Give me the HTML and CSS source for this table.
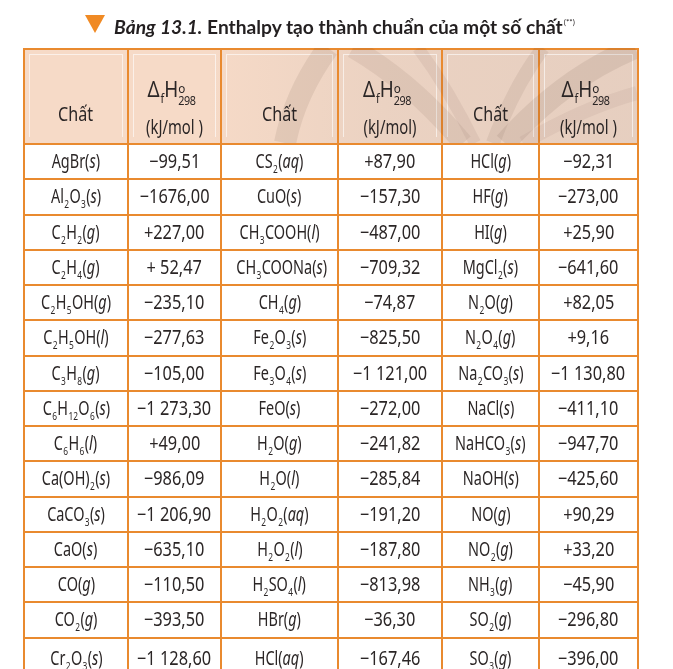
FILE: index.html
```html
<!DOCTYPE html>
<html lang="vi">
<head>
<meta charset="utf-8">
<title>Bảng 13.1</title>
<link rel="stylesheet" href="styles.css">
</head>
<body>
<div class="page">
  <h1 class="title"><span class="tri"></span><span class="ttext"><em>Bảng 13.1.</em> Enthalpy tạo thành chuẩn của một số chất<sup>(**)</sup></span></h1>
  <div class="tblwrap">
  <table class="tbl">
    <colgroup>
      <col class="c1"><col class="c2"><col class="c3"><col class="c4"><col class="c5"><col class="c6">
    </colgroup>
    <thead>
      <tr>
        <th class="hname"><span class="hn">Chất</span></th>
        <th class="hval"><span class="dh">Δ<span class="f">f</span>H<span class="stk"><span class="deg">o</span><span class="t298">298</span></span></span><span class="unit">(kJ/mol )</span></th>
        <th class="hname"><span class="hn">Chất</span></th>
        <th class="hval"><span class="dh">Δ<span class="f">f</span>H<span class="stk"><span class="deg">o</span><span class="t298">298</span></span></span><span class="unit">(kJ/mol)</span></th>
        <th class="hname"><span class="hn">Chất</span></th>
        <th class="hval"><span class="dh">Δ<span class="f">f</span>H<span class="stk"><span class="deg">o</span><span class="t298">298</span></span></span><span class="unit">(kJ/mol )</span></th>
      </tr>
    </thead>
    <tbody>
      <tr><td><span class="n">AgBr(<i>s</i>)</span></td><td><span class="x">−99,51</span></td><td><span class="n">CS<sub>2</sub>(<i>aq</i>)</span></td><td><span class="x">+87,90</span></td><td><span class="n">HCl(<i>g</i>)</span></td><td><span class="x">−92,31</span></td></tr>
      <tr><td><span class="n">Al<sub>2</sub>O<sub>3</sub>(<i>s</i>)</span></td><td><span class="x">−1676,00</span></td><td><span class="n">CuO(<i>s</i>)</span></td><td><span class="x">−157,30</span></td><td><span class="n">HF(<i>g</i>)</span></td><td><span class="x">−273,00</span></td></tr>
      <tr><td><span class="n">C<sub>2</sub>H<sub>2</sub>(<i>g</i>)</span></td><td><span class="x">+227,00</span></td><td><span class="n">CH<sub>3</sub>COOH(<i>l</i>)</span></td><td><span class="x">−487,00</span></td><td><span class="n">HI(<i>g</i>)</span></td><td><span class="x">+25,90</span></td></tr>
      <tr><td><span class="n">C<sub>2</sub>H<sub>4</sub>(<i>g</i>)</span></td><td><span class="x">+ 52,47</span></td><td><span class="n">CH<sub>3</sub>COONa(<i>s</i>)</span></td><td><span class="x">−709,32</span></td><td><span class="n">MgCl<sub>2</sub>(<i>s</i>)</span></td><td><span class="x">−641,60</span></td></tr>
      <tr><td><span class="n">C<sub>2</sub>H<sub>5</sub>OH(<i>g</i>)</span></td><td><span class="x">−235,10</span></td><td><span class="n">CH<sub>4</sub>(<i>g</i>)</span></td><td><span class="x">−74,87</span></td><td><span class="n">N<sub>2</sub>O(<i>g</i>)</span></td><td><span class="x">+82,05</span></td></tr>
      <tr><td><span class="n">C<sub>2</sub>H<sub>5</sub>OH(<i>l</i>)</span></td><td><span class="x">−277,63</span></td><td><span class="n">Fe<sub>2</sub>O<sub>3</sub>(<i>s</i>)</span></td><td><span class="x">−825,50</span></td><td><span class="n">N<sub>2</sub>O<sub>4</sub>(<i>g</i>)</span></td><td><span class="x">+9,16</span></td></tr>
      <tr><td><span class="n">C<sub>3</sub>H<sub>8</sub>(<i>g</i>)</span></td><td><span class="x">−105,00</span></td><td><span class="n">Fe<sub>3</sub>O<sub>4</sub>(<i>s</i>)</span></td><td><span class="x">−1 121,00</span></td><td><span class="n">Na<sub>2</sub>CO<sub>3</sub>(<i>s</i>)</span></td><td><span class="x">−1 130,80</span></td></tr>
      <tr><td><span class="n">C<sub>6</sub>H<sub>12</sub>O<sub>6</sub>(<i>s</i>)</span></td><td><span class="x">−1 273,30</span></td><td><span class="n">FeO(<i>s</i>)</span></td><td><span class="x">−272,00</span></td><td><span class="n">NaCl(<i>s</i>)</span></td><td><span class="x">−411,10</span></td></tr>
      <tr><td><span class="n">C<sub>6</sub>H<sub>6</sub>(<i>l</i>)</span></td><td><span class="x">+49,00</span></td><td><span class="n">H<sub>2</sub>O(<i>g</i>)</span></td><td><span class="x">−241,82</span></td><td><span class="n">NaHCO<sub>3</sub>(<i>s</i>)</span></td><td><span class="x">−947,70</span></td></tr>
      <tr><td><span class="n">Ca(OH)<sub>2</sub>(<i>s</i>)</span></td><td><span class="x">−986,09</span></td><td><span class="n">H<sub>2</sub>O(<i>l</i>)</span></td><td><span class="x">−285,84</span></td><td><span class="n">NaOH(<i>s</i>)</span></td><td><span class="x">−425,60</span></td></tr>
      <tr><td><span class="n">CaCO<sub>3</sub>(<i>s</i>)</span></td><td><span class="x">−1 206,90</span></td><td><span class="n">H<sub>2</sub>O<sub>2</sub>(<i>aq</i>)</span></td><td><span class="x">−191,20</span></td><td><span class="n">NO(<i>g</i>)</span></td><td><span class="x">+90,29</span></td></tr>
      <tr><td><span class="n">CaO(<i>s</i>)</span></td><td><span class="x">−635,10</span></td><td><span class="n">H<sub>2</sub>O<sub>2</sub>(<i>l</i>)</span></td><td><span class="x">−187,80</span></td><td><span class="n">NO<sub>2</sub>(<i>g</i>)</span></td><td><span class="x">+33,20</span></td></tr>
      <tr><td><span class="n">CO(<i>g</i>)</span></td><td><span class="x">−110,50</span></td><td><span class="n">H<sub>2</sub>SO<sub>4</sub>(<i>l</i>)</span></td><td><span class="x">−813,98</span></td><td><span class="n">NH<sub>3</sub>(<i>g</i>)</span></td><td><span class="x">−45,90</span></td></tr>
      <tr><td><span class="n">CO<sub>2</sub>(<i>g</i>)</span></td><td><span class="x">−393,50</span></td><td><span class="n">HBr(<i>g</i>)</span></td><td><span class="x">−36,30</span></td><td><span class="n">SO<sub>2</sub>(<i>g</i>)</span></td><td><span class="x">−296,80</span></td></tr>
      <tr class="last"><td><span class="n">Cr<sub>2</sub>O<sub>3</sub>(<i>s</i>)</span></td><td><span class="x">−1 128,60</span></td><td><span class="n">HCl(<i>aq</i>)</span></td><td><span class="x">−167,46</span></td><td><span class="n">SO<sub>3</sub>(<i>g</i>)</span></td><td><span class="x">−396,00</span></td></tr>
    </tbody>
  </table>
  <svg class="wm" viewBox="0 0 614 95" aria-hidden="true">
    <g fill="none" stroke="#9c8e88" stroke-linecap="butt">
      <path d="M262 95 Q272 45 305 0" stroke-width="22" stroke-opacity="0.16"/>
      <path d="M440 95 Q390 35 330 0" stroke-width="20" stroke-opacity="0.14"/>
      <path d="M452 95 Q425 40 395 0" stroke-width="12" stroke-opacity="0.12"/>
      <path d="M470 95 Q490 40 520 0" stroke-width="14" stroke-opacity="0.14"/>
      <path d="M482 95 Q540 30 612 0" stroke-width="22" stroke-opacity="0.16"/>
      <path d="M500 95 Q560 60 614 45" stroke-width="14" stroke-opacity="0.1"/>
    </g>
  </svg>
  </div>
</div>
</body>
</html>
```
FILE: styles.css
```css
html, body {
  margin: 0;
  padding: 0;
  background: #ffffff;
}
body {
  width: 673px;
  height: 669px;
  overflow: hidden;
}
.page {
  padding: 14px 0 0 23px;
}
.title {
  margin: 0 0 10px 62px;
  display: flex;
  align-items: center;
  gap: 9px;
  height: 24px;
  font-family: Lato, "Noto Sans", sans-serif;
  font-weight: 700;
  font-size: 19.2px;
  color: #231f20;
  white-space: nowrap;
}
.title em {
  font-style: italic;
}
.title sup {
  font-size: 8px;
  font-weight: 400;
  vertical-align: 9px;
  margin-left: 1px;
}
.tri {
  width: 0;
  height: 0;
  border-left: 10.5px solid transparent;
  border-right: 10.5px solid transparent;
  border-top: 18px solid #f08a24;
  margin-top: -4px;
}
.tblwrap {
  position: relative;
  width: 614px;
}
.wm {
  position: absolute;
  left: 0;
  top: 0;
  width: 614px;
  height: 95px;
  pointer-events: none;
  mix-blend-mode: multiply;
}
.tbl {
  border-collapse: collapse;
  table-layout: fixed;
  width: 614px;
  font-family: "Noto Sans", "DejaVu Sans", sans-serif;
  font-size: 19px;
  color: #2b2626;
}
.c1 { width: 104px; }
.c2 { width: 93px; }
.c3 { width: 117px; }
.c4 { width: 104px; }
.c5 { width: 97px; }
.c6 { width: 99px; }
.tbl th, .tbl td {
  border: 2px solid #e98a2f;
  padding: 0;
  text-align: center;
  white-space: nowrap;
}
.tbl thead tr {
  height: 95px;
  background:
    linear-gradient(90deg, rgba(255,255,255,0) 30%, rgba(200,185,178,0.25) 60%, rgba(200,185,178,0.35) 100%),
    #f6dac7;
}
.tbl th {
  position: relative;
  font-weight: 400;
  vertical-align: bottom;
}
.tbl th::before {
  content: "";
  position: absolute;
  left: 4px;
  right: 4px;
  top: 4px;
  bottom: 6px;
  border: 1px solid rgba(255,255,255,0.6);
  border-bottom: none;
  pointer-events: none;
}
.hname {
  padding-bottom: 16px !important;
}
.hn {
  display: inline-block;
  transform: scaleX(0.85);
}
.hval {
  padding-bottom: 5px !important;
}
.dh {
  display: flex;
  justify-content: center;
  align-items: flex-end;
  font-size: 21px;
  line-height: 1;
  margin-bottom: 16px;
  margin-right: 6px;
  transform: scaleX(0.9);
}
.dh .f {
  font-size: 12px;
  margin-bottom: -5px;
  margin-left: 1px;
}
.stk {
  display: inline-flex;
  flex-direction: column;
  align-items: flex-start;
  line-height: 1;
  margin-left: 0;
}
.deg {
  font-size: 13px;
  line-height: 9px;
  margin-bottom: 2px;
}
.t298 {
  font-size: 12px;
  line-height: 11px;
  margin-bottom: -6px;
  letter-spacing: -0.5px;
}
.unit {
  display: block;
  font-size: 19px;
  line-height: 22px;
  transform: scaleX(0.78);
}
.tbl tbody tr {
  height: 35.25px;
}
.tbl tbody tr.last {
  height: 42px;
}
.tbl td {
  line-height: 1;
}
.n, .x {
  display: inline-block;
  transform-origin: 50% 50%;
}
.n {
  transform: scaleX(0.76);
}
.x {
  transform: scaleX(0.86);
}
.tbl td i {
  font-style: italic;
}
.tbl sub {
  font-size: 11px;
  vertical-align: -5px;
  line-height: 0;
  margin: 0 0.5px;
}
```
